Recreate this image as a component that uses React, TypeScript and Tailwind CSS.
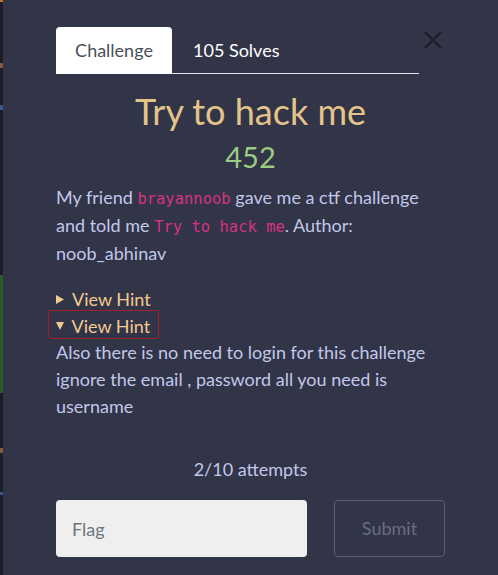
const strip = [
  { h: 2, c: "bg-[#c8742a]" },
  { h: 61, c: "bg-[#1c1d28]" },
  { h: 5, c: "bg-[#8a5a3a]" },
  { h: 37, c: "bg-[#1c1d28]" },
  { h: 5, c: "bg-[#3a5a8a]" },
  { h: 165, c: "bg-[#1c1d28]" },
  { h: 118, c: "bg-[#2b5a2b]" },
  { h: 55, c: "bg-[#1c1d28]" },
  { h: 5, c: "bg-[#8a5a3a]" },
  { h: 39, c: "bg-[#1c1d28]" },
  { h: 3, c: "bg-[#3a5a8a]" },
  { h: 80, c: "bg-[#1c1d28]" },
];

function Arrow({ down }: { down?: boolean }) {
  return (
    <svg width="8" height="9" viewBox="0 0 8 9" className="mr-[8px] shrink-0">
      {down ? (
        <polygon points="0,1 8,1 4,9" fill="#f2c98e" />
      ) : (
        <polygon points="0,0 8,4.5 0,9" fill="#f2c98e" />
      )}
    </svg>
  );
}

export default function App() {
  return (
    <div className="flex h-[575px] w-[498px] overflow-hidden font-['Lato','Noto_Sans',sans-serif]">
      {/* page behind the modal */}
      <div className="flex w-[3px] flex-col">
        {strip.map((s, i) => (
          <div key={i} className={s.c} style={{ height: s.h }} />
        ))}
      </div>

      <div className="flex-1 bg-[#323448]">
        <div className="ml-[53px] w-[389px] pt-[27px]">
          {/* Tabs */}
          <div className="flex items-start">
            <div className="flex w-[363px] shrink-0 border-b border-[#dee2e6]">
              <div className="-mb-px flex h-[47px] w-[116px] items-center justify-center rounded-t-[4px] bg-white text-[18px] text-[#495057]">
                Challenge
              </div>
              <div className="flex h-[46px] items-center pl-[21px] text-[18px] text-white">
                105 Solves
              </div>
            </div>
            <button className="ml-[5px] mt-[4px]">
              <svg width="18" height="18" viewBox="0 0 18 18">
                <path d="M1 1L17 17M17 1L1 17" stroke="#1c1d28" strokeWidth="2" />
              </svg>
            </button>
          </div>

          {/* Title */}
          <h2 className="mt-[16px] text-center text-[36px] leading-[43px] text-[#e3c48a]">
            Try to hack me
          </h2>
          <h4 className="mt-[7px] text-center text-[29px] leading-[34px] text-[#9acc82]">
            452
          </h4>

          {/* Description */}
          <p className="mt-[9px] text-[18px] leading-[28px] text-[#c2c8ea]">
            My friend{" "}
            <code className="font-['DejaVu_Sans_Mono',monospace] text-[15.5px] leading-none text-[#d63384]">
              brayannoob
            </code>{" "}
            gave me a ctf challenge and told me{" "}
            <code className="font-['DejaVu_Sans_Mono',monospace] text-[15.5px] leading-none text-[#d63384]">
              Try to hack me
            </code>
            . Author: noob_abhinav
          </p>

          {/* Hints */}
          <div className="mt-[21px] text-[18px] text-[#f2c98e]">
            <div className="flex h-[22px] items-center leading-[22px]">
              <Arrow />
              View Hint
            </div>
            <div className="-ml-[8px] flex h-[29px] w-[111px] items-center rounded-[3px] border-[1.5px] border-[#a0202c] pl-[6.5px] pt-[2px] leading-[26px]">
              <Arrow down />
              View Hint
            </div>
            <p className="leading-[27px] text-[#c2c8ea]">
              Also there is no need to login for this challenge ignore the email , password all you need is username
            </p>
          </div>

          {/* Attempts */}
          <div className="mt-[37px] text-center text-[18px] leading-[24px] text-[#c2c8ea]">
            2/10 attempts
          </div>

          {/* Flag form */}
          <div className="mt-[19px] flex">
            <input
              placeholder="Flag"
              className="h-[57px] w-[251px] rounded-[4px] bg-[#efefef] px-[16px] text-[18px] text-[#495057] outline-none placeholder:text-[#6c757d]"
            />
            <button className="ml-[27px] h-[57px] w-[112px] rounded-[4px] border border-[#5b5f72] text-[18px] text-[#6a6e80]">
              Submit
            </button>
          </div>
        </div>
      </div>
    </div>
  );
}
